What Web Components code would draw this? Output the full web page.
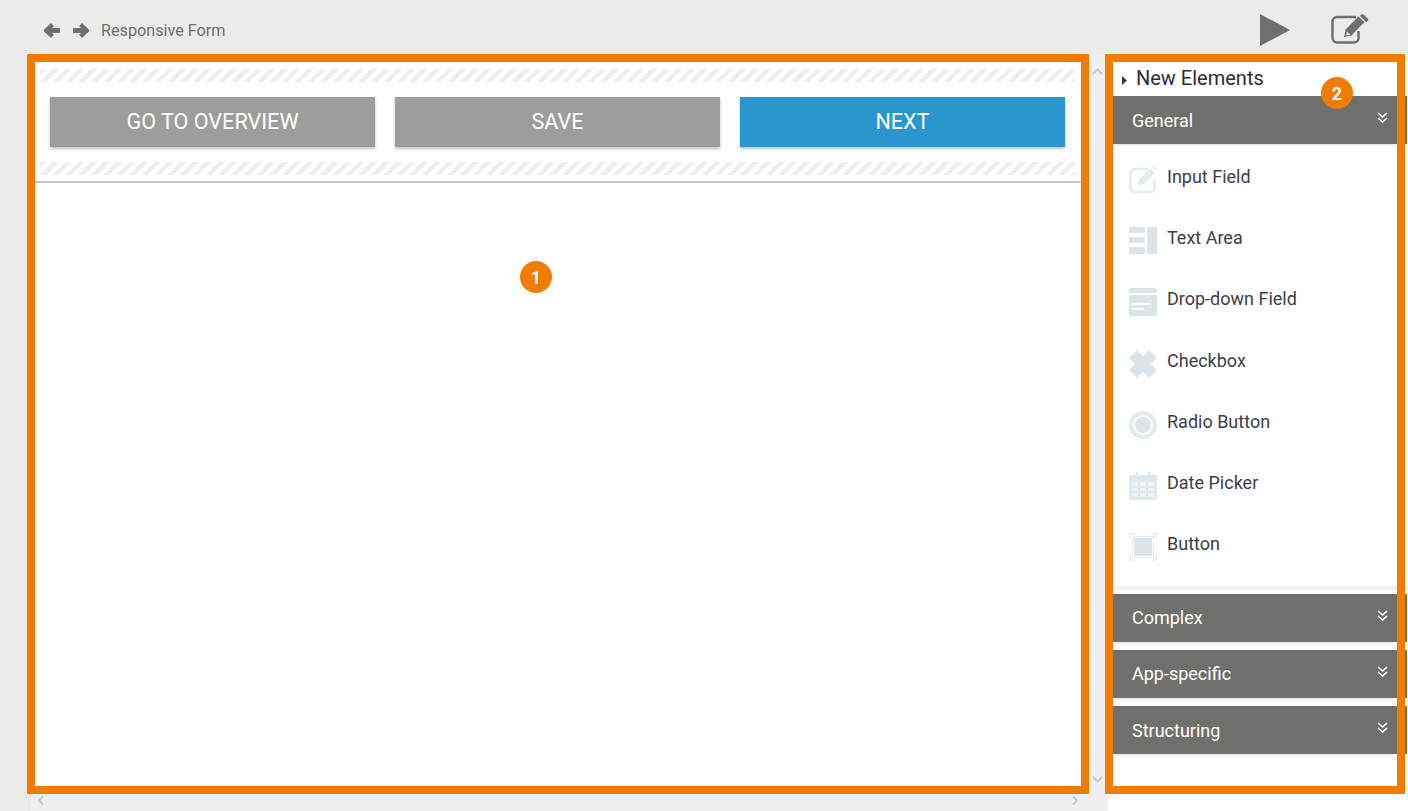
<!DOCTYPE html>
<html lang="en">
<head>
<meta charset="utf-8">
<title>Responsive Form</title>
<style>
  html, body { margin: 0; height: 100%; overflow: hidden; }
  body { background: #ebebeb; font-family: Roboto, "Liberation Sans", sans-serif; }
</style>
</head>
<body>
<editor-shell>
  <top-bar slot="top" title-text="Responsive Form"></top-bar>
  <form-canvas slot="canvas">
    <action-button>GO TO OVERVIEW</action-button>
    <action-button>SAVE</action-button>
    <action-button primary>NEXT</action-button>
  </form-canvas>
  <element-palette slot="palette" heading="New Elements">
    <palette-group label="General" open>
      <palette-item icon="input">Input Field</palette-item>
      <palette-item icon="textarea">Text Area</palette-item>
      <palette-item icon="dropdown">Drop-down Field</palette-item>
      <palette-item icon="checkbox">Checkbox</palette-item>
      <palette-item icon="radio">Radio Button</palette-item>
      <palette-item icon="date">Date Picker</palette-item>
      <palette-item icon="button">Button</palette-item>
    </palette-group>
    <palette-group label="Complex"></palette-group>
    <palette-group label="App-specific"></palette-group>
    <palette-group label="Structuring"></palette-group>
  </element-palette>
</editor-shell>
<note-frame number="1" style="left:27px;top:54px;width:1062px;height:740px;--badge-x:485px;--badge-y:199px"></note-frame>
<note-frame number="2" style="left:1105px;top:54px;width:300px;height:740px;--badge-x:208px;--badge-y:15px"></note-frame>

<script>
// all icons in one place, drawn on a 28x28 box
const PALETTE_ICONS = {
  input: `<path fill="none" stroke="#e3ebee" stroke-width="2.500" d="M25.500 14v8.500a3.500 3.500 0 0 1-3.500 3.500H5a3.500 3.500 0 0 1-3.500-3.500V6.500A3.500 3.500 0 0 1 5 3h14"/>
    <path fill="#e3ebee" d="M8.500 19.500l1.500-6L21.500 2l4.500 4.500L15 18zM23 1l1-1 4 4-1 1z"/>`,
  textarea: `<path fill="#dbe5e9" d="M0 0h16v6H0zM0 10h16v6H0zM0 20h16v7H0zM18 0h10v27H18z"/>`,
  dropdown: `<path fill="#dbe5e9" d="M2 0h24a2 2 0 0 1 2 2v3H0V2a2 2 0 0 1 2-2zM0 7h28v19a2 2 0 0 1-2 2H2a2 2 0 0 1-2-2zM3 15v2h19v-2zM3 20v2h12v-2z" fill-rule="evenodd"/>`,
  checkbox: `<path fill="#dbe5e9" d="M8 0l6 6 6-6 8 8-6 6 6 6-8 8-6-6-6 6-8-8 6-6-6-6z"/>`,
  radio: `<circle cx="14" cy="14" r="12" fill="none" stroke="#e3ebee" stroke-width="4"/><circle cx="14" cy="14" r="8" fill="#dbe5e9"/>`,
  date: `<rect y="3" width="28" height="25" rx="2" fill="#eff4f5"/>
    <path fill="#dfe8ec" fill-rule="evenodd" d="M2 3h4v2h3V3h10v2h3V3h4a2 2 0 0 1 2 2v21a2 2 0 0 1-2 2H2a2 2 0 0 1-2-2V5a2 2 0 0 1 2-2zM3 10v4h6v-4zM11 10v4h6v-4zM19 10v4h6v-4zM3 16v3h6v-3zM11 16v3h6v-3zM19 16v3h6v-3zM3 21v4h6v-4zM11 21v4h6v-4zM19 21v4h6v-4z"/>
    <rect x="6.500" y="0" width="2.500" height="6" rx="1.200" fill="#dfe8ec"/><rect x="19" y="0" width="2.500" height="6" rx="1.200" fill="#dfe8ec"/>`,
  button: `<path fill="none" stroke="#e4ecef" stroke-width="1.500" d="M1 6V1h5M22 1h5v5M27 22v5h-5M6 27H1v-5"/>
    <rect x="3.500" y="3.500" width="21" height="21" fill="none" stroke="#e4ecef"/><rect x="5" y="5" width="18" height="18" fill="#dbe5e9"/>`
};

class EditorShell extends HTMLElement {
  connectedCallback() {
    this.attachShadow({ mode: 'open' });
    this.shadowRoot.innerHTML = `
      <style>
        :host { display: grid; grid-template-rows: 54px 1fr; height: 811px; }
        .body { display: grid; grid-template-columns: 1fr 300px; min-height: 0; }
      </style>
      <slot name="top"></slot>
      <div class="body">
        <slot name="canvas"></slot>
        <slot name="palette"></slot>
      </div>
    `;
  }
}

class TopBar extends HTMLElement {
  connectedCallback() {
    this.attachShadow({ mode: 'open' });
    this.shadowRoot.innerHTML = `
      <style>
        :host { display: flex; align-items: center; padding: 0 39px 0 43px; color: #6f706c; }
        svg { display: block; fill: #6f706c; }
        .arrow { fill: none; stroke: #6f706c; stroke-linejoin: round; margin-top: 7px; }
        .back { margin-right: 13px; }
        .title { margin-left: 11px; margin-top: 7px; font-size: 16.200px; }
        .spacer { flex: 1; }
        .edit { margin-left: 41px; margin-top: 3px; }
        .play { margin-top: 6px; }
      </style>
      <svg class="arrow back" width="17" height="17" viewBox="0 0 17 17"><path stroke-width="4.200" d="M9.500 2.600L3 8.500l6.500 5.900"/><path stroke-width="4.800" d="M4 8.500h13"/></svg>
      <svg class="arrow" width="17" height="17" viewBox="0 0 17 17"><path stroke-width="4.200" d="M7.500 2.600L14 8.500l-6.500 5.900"/><path stroke-width="4.800" d="M13 8.500H0"/></svg>
      <span class="title">${this.getAttribute('title-text')}</span>
      <span class="spacer"></span>
      <svg class="play" width="30" height="32" viewBox="0 0 30 32"><path d="M0 0l30 16L0 32z"/></svg>
      <svg class="edit" width="38" height="30" viewBox="0 0 38 30">
        <path fill="none" stroke="#6f706c" stroke-width="2.500" d="M27.500 17v7a4.500 4.500 0 0 1-4.500 4.500H6A4.500 4.500 0 0 1 1.500 24V7.500A4.500 4.500 0 0 1 6 3h19"/>
        <path d="M13 23l1.500-7.500L27.500 2.500l6 5.800L20.500 21.500zM30 0.800a2 2 0 0 1 2.800 0l3.800 3.600a2 2 0 0 1 0 2.800l-1.200 1.100-6.500-6.300z"/>
        <path fill="#ebebeb" d="M15.800 17.500l3.500 3.300-3.900 0.800z"/>
      </svg>
    `;
  }
}

class FormCanvas extends HTMLElement {
  connectedCallback() {
    this.attachShadow({ mode: 'open' });
    this.shadowRoot.innerHTML = `
      <style>
        :host { display: grid; grid-template-columns: 1fr 19px; grid-template-rows: 1fr 17px; margin-left: 31px; min-height: 0; }
        .sheet { background: #fff; padding-top: 15px; }
        .stripes {
          height: 13px; margin: 0 14px 0 9px;
          background: repeating-linear-gradient(135deg, #eeeeee 0 4.500px, #fff 4.500px 9px);
        }
        .actions { display: grid; grid-template-columns: repeat(3, 1fr); gap: 20px; padding: 15px 24px 15px 19px; }
        .rule { height: 2px; margin-top: 6px; background: #c9c9c9; }
        .track { background: #f0f0f0; display: flex; align-items: center; justify-content: space-between; }
        .vertical { flex-direction: column; padding: 14px 3px 11px 0; }
        .horizontal { padding: 0 10px 4px 6px; }
        .corner { background: #f0f0f0; }
        svg { display: block; fill: none; stroke: #c8c8c8; stroke-width: 2; }
      </style>
      <div class="sheet">
        <div class="stripes"></div>
        <div class="actions"><slot></slot></div>
        <div class="stripes"></div>
        <div class="rule"></div>
      </div>
      <div class="track vertical">
        <svg width="11" height="7" viewBox="0 0 11 7"><path d="M1 6l4.500-4.500L10 6"/></svg>
        <svg width="11" height="7" viewBox="0 0 11 7"><path d="M1 1l4.500 4.500L10 1"/></svg>
      </div>
      <div class="track horizontal">
        <svg width="7" height="9" viewBox="0 0 7 9"><path d="M6 0.500L2 4.500 6 8.500"/></svg>
        <svg width="7" height="9" viewBox="0 0 7 9"><path d="M1 0.500l4 4-4 4"/></svg>
      </div>
      <div class="corner"></div>
    `;
  }
}

class ActionButton extends HTMLElement {
  connectedCallback() {
    this.attachShadow({ mode: 'open' });
    this.shadowRoot.innerHTML = `
      <style>
        :host {
          display: flex; align-items: center; justify-content: center; height: 50px;
          background: #9d9d9b; color: #fff; font-size: 21.600px;
          box-shadow: 0 2px 3px rgba(0, 0, 0, 0.25);
        }
        :host([primary]) { background: #2b96ce; }
        span { margin-top: -1px; }
      </style>
      <span><slot></slot></span>
    `;
  }
}

class ElementPalette extends HTMLElement {
  connectedCallback() {
    this.attachShadow({ mode: 'open' });
    this.shadowRoot.innerHTML = `
      <style>
        :host { display: block; background: #fff; padding-left: 5px; }
        .heading { display: flex; align-items: center; height: 42px; padding-left: 9px; color: #2b2e33; font-size: 20px; }
        .heading svg { margin: 11px 9px 0 0; fill: #3c3c3c; }
        .heading span { margin-top: 6px; }
      </style>
      <div class="heading">
        <svg width="5" height="9" viewBox="0 0 5 9"><path d="M0 0l5 4.500L0 9z"/></svg>
        <span>${this.getAttribute('heading')}</span>
      </div>
      <slot></slot>
    `;
  }
}

class PaletteGroup extends HTMLElement {
  connectedCallback() {
    this.attachShadow({ mode: 'open' });
    const open = this.hasAttribute('open');
    this.shadowRoot.innerHTML = `
      <style>
        :host { display: block; margin-bottom: 8.200px; margin-right: 1px; }
        .head {
          display: flex; align-items: center; justify-content: space-between; height: 48px;
          padding: 0 19px; background: #6f706c; color: #fff; font-size: 18px;
          box-shadow: 0 1px 2px rgba(0, 0, 0, 0.12);
        }
        .head svg { margin-top: -5px; fill: none; stroke: #fff; stroke-width: 1.600; display: block; }
        .items { padding: 2.550px 0 10.860px; border-bottom: 4px solid #f0f0f0; margin-bottom: -4px; }
      </style>
      <div class="head">
        <span>${this.getAttribute('label')}</span>
        <svg width="11" height="11" viewBox="0 0 11 11"><path d="M1 1l4.500 4L10 1M1 6l4.500 4L10 6"/></svg>
      </div>
      ${open ? '<div class="items"><slot></slot></div>' : ''}
    `;
  }
}

class PaletteItem extends HTMLElement {
  connectedCallback() {
    this.attachShadow({ mode: 'open' });
    this.shadowRoot.innerHTML = `
      <style>
        :host { display: flex; align-items: center; gap: 10px; height: 61.170px; padding-left: 16px; color: #3d4046; font-size: 18px; }
        svg { display: block; margin-top: 6px; }
        span { margin-top: -1px; }
      </style>
      <svg width="28" height="28" viewBox="0 0 28 28">${PALETTE_ICONS[this.getAttribute('icon')]}</svg>
      <span><slot></slot></span>
    `;
  }
}

// orange call-out frame with a numbered badge, sits on top of the screen
class NoteFrame extends HTMLElement {
  connectedCallback() {
    this.attachShadow({ mode: 'open' });
    this.shadowRoot.innerHTML = `
      <style>
        :host { position: absolute; box-sizing: border-box; border: 8px solid #f07c00; font-family: Roboto, "Liberation Sans", sans-serif; }
        .badge {
          position: absolute; left: var(--badge-x); top: var(--badge-y);
          width: 32px; height: 32px; border-radius: 50%;
          display: flex; align-items: center; justify-content: center;
          background: #f07c00; color: #fff; font-size: 18px; font-weight: 700;
        }
      </style>
      <div class="badge">${this.getAttribute('number')}</div>
    `;
  }
}

customElements.define('editor-shell', EditorShell);
customElements.define('top-bar', TopBar);
customElements.define('form-canvas', FormCanvas);
customElements.define('action-button', ActionButton);
customElements.define('element-palette', ElementPalette);
customElements.define('palette-group', PaletteGroup);
customElements.define('palette-item', PaletteItem);
customElements.define('note-frame', NoteFrame);
</script>
</body>
</html>
